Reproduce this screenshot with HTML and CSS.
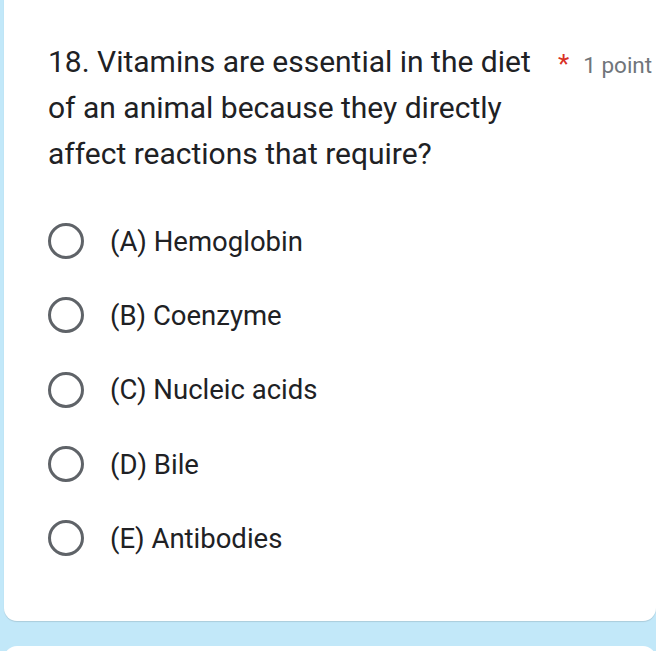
FILE: index.html
```html
<!DOCTYPE html>
<html>
<head>
<meta charset="utf-8">
<link rel="stylesheet" href="styles.css">
</head>
<body>
<div class="page">
  <div class="card">
    <div class="header">
      <div class="question">18. Vitamins are essential in the diet of an animal because they directly affect reactions that require?</div>
      <div class="meta"><span class="req">*</span><span class="points">1 point</span></div>
    </div>
    <div class="options">
      <div class="option"><span class="radio"></span><span class="label">(A) Hemoglobin</span></div>
      <div class="option"><span class="radio"></span><span class="label">(B) Coenzyme</span></div>
      <div class="option"><span class="radio"></span><span class="label">(C) Nucleic acids</span></div>
      <div class="option"><span class="radio"></span><span class="label">(D) Bile</span></div>
      <div class="option"><span class="radio"></span><span class="label">(E) Antibodies</span></div>
    </div>
  </div>
  <div class="card next"></div>
</div>
</body>
</html>
```
FILE: styles.css
```css
html, body {
  margin: 0;
  padding: 0;
  background: #c2e8f9;
  overflow: hidden;
}
body {
  font-family: Roboto, "Liberation Sans", sans-serif;
  color: #202124;
}
.page {
  display: flex;
  flex-direction: column;
  gap: 25px;
  padding-left: 4px;
  height: 651px;
  overflow: hidden;
}
.card {
  background: #fff;
  border-radius: 13px;
  box-shadow: 0 1px 1px rgba(0,0,0,0.12);
  flex-shrink: 0;
}
.card:first-child {
  margin-top: -20px;
  height: 641px;
  box-sizing: border-box;
  padding: 59px 0 0 44px;
}
.next {
  height: 40px;
}
.header {
  display: flex;
  align-items: flex-start;
}
.question {
  width: 495px;
  flex-shrink: 0;
  font-size: 30px;
  line-height: 46px;
}
.meta {
  display: flex;
  align-items: baseline;
  margin-left: 15px;
  padding-top: 10px;
  white-space: nowrap;
}
.req {
  color: #d93025;
  font-size: 26px;
  margin-right: 14px;
}
.points {
  color: #70757a;
  font-size: 22.5px;
}
.options {
  display: flex;
  flex-direction: column;
  margin-top: 27px;
}
.option {
  display: flex;
  align-items: center;
  height: 74.3px;
}
.radio {
  width: 36px;
  height: 36px;
  box-sizing: border-box;
  border: 3.5px solid #5f6368;
  border-radius: 50%;
  margin-left: 0;
  margin-right: 26px;
}
.label {
  font-size: 27.5px;
}
```
